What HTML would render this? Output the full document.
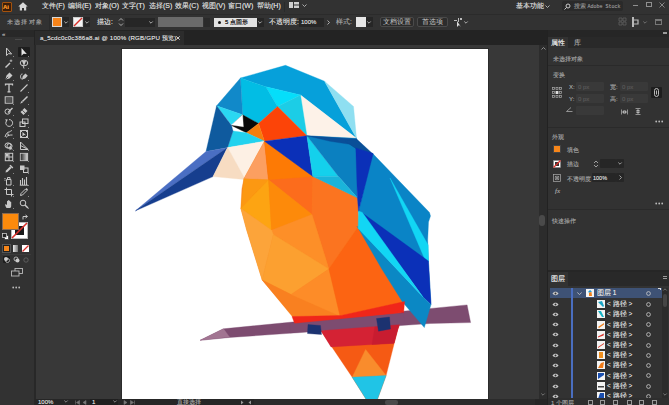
<!DOCTYPE html>
<html><head><meta charset="utf-8">
<style>
*{box-sizing:border-box;margin:0;padding:0}
html,body{width:669px;height:405px;overflow:hidden;background:#323232;font-family:"Liberation Sans",sans-serif;color:#c8c8c8}
.a{position:absolute}
.t{position:absolute;font-size:7px;line-height:8px;white-space:nowrap;color:#cfcfcf;text-shadow:0 0 0.5px currentColor}
.d{color:#9a9a9a}
.box{position:absolute;background:#262626}
.btn{position:absolute;border:1px solid #4a4a4a;border-radius:2px;background:#2c2c2c;font-size:7px;line-height:8px;color:#c8c8c8;text-align:center;white-space:nowrap}
svg.i{position:absolute;overflow:visible}
</style></head><body>
<!-- ===== menu bar ===== -->
<div class="a" style="left:0;top:0;width:669px;height:14px;background:#323232"></div>
<div class="a" style="left:2px;top:2px;width:10px;height:10px;background:#3b1e08;border:1px solid #a4520e;border-radius:1px"></div>
<div class="t" style="left:3px;top:3px;font-size:6px;line-height:8px;color:#f08a24;font-weight:bold">Ai</div>
<svg class="i" style="left:18px;top:2px" width="10" height="9" viewBox="0 0 10 9"><path d="M5 0.3L0.3 4.6H1.8V8.6H4V6H6V8.6H8.2V4.6H9.7Z" fill="#d8d8d8"/></svg>
<div class="t" style="left:42px;top:2px">文件(F)</div>
<div class="t" style="left:68px;top:2px">编辑(E)</div>
<div class="t" style="left:95px;top:2px">对象(O)</div>
<div class="t" style="left:122px;top:2px">文字(T)</div>
<div class="t" style="left:149px;top:2px">选择(S)</div>
<div class="t" style="left:175px;top:2px">效果(C)</div>
<div class="t" style="left:202px;top:2px">视图(V)</div>
<div class="t" style="left:228px;top:2px">窗口(W)</div>
<div class="t" style="left:257px;top:2px">帮助(H)</div>
<div class="a" style="left:284px;top:2px;width:1px;height:10px;background:#2a2a2a"></div>
<svg class="i" style="left:289px;top:2px" width="10" height="6" viewBox="0 0 10 6"><rect x="0" y="0" width="4" height="6" fill="#d0d0d0"/><rect x="5" y="0" width="5" height="2.5" fill="#d0d0d0"/><rect x="5" y="3.5" width="5" height="2.5" fill="#d0d0d0"/></svg>
<svg class="i" style="left:302px;top:4px" width="5" height="3" viewBox="0 0 5 3"><path d="M0.5 0.5L2.5 2.5L4.5 0.5" stroke="#bbb" fill="none" stroke-width="0.9"/></svg>
<div class="t" style="left:516px;top:2px">基本功能</div>
<svg class="i" style="left:545px;top:5px" width="5" height="3" viewBox="0 0 5 3"><path d="M0.5 0.5L2.5 2.5L4.5 0.5" stroke="#bbb" fill="none" stroke-width="0.9"/></svg>
<div class="a" style="left:562px;top:1px;width:61px;height:10px;background:#2a2a2a;border-radius:2px"></div>
<svg class="i" style="left:564px;top:3px" width="7" height="7" viewBox="0 0 7 7"><circle cx="4" cy="3" r="2" stroke="#ccc" fill="none" stroke-width="1"/><path d="M2.6 4.4L0.5 6.5" stroke="#ccc" stroke-width="1"/></svg>
<div class="t d" style="left:574px;top:2px;font-size:5.5px;color:#8a8a8a">搜索 <span style="font-family:'Liberation Mono',monospace;font-size:5px">Adobe Stock</span></div>
<div class="a" style="left:633px;top:5px;width:5px;height:1px;background:#8f8f8f"></div>
<div class="a" style="left:646px;top:2px;width:6px;height:5px;border:1px solid #8f8f8f"></div>
<svg class="i" style="left:659px;top:2px" width="6" height="6" viewBox="0 0 6 6"><path d="M0.5 0.5L5.5 5.5M5.5 0.5L0.5 5.5" stroke="#8f8f8f" stroke-width="0.9"/></svg>

<!-- ===== control bar ===== -->
<div class="a" style="left:0;top:14px;width:669px;height:1px;background:#2b2b2b"></div>
<div class="a" style="left:0;top:15px;width:669px;height:15px;background:#323232"></div>
<div class="t d" style="left:7px;top:18px;font-size:6px;letter-spacing:1.2px">未选择对象</div>
<div class="a" style="left:49px;top:15px;width:1px;height:15px;background:#2b2b2b"></div>
<div class="a" style="left:52px;top:17px;width:10px;height:10px;background:#f7841a;border:1px solid #d8d8d8"></div>
<div class="box" style="left:63px;top:17px;width:6px;height:10px"></div>
<svg class="i" style="left:64px;top:21px" width="4" height="3" viewBox="0 0 4 3"><path d="M0.3 0.5L2 2.2L3.7 0.5" stroke="#bbb" fill="none" stroke-width="0.9"/></svg>
<div class="a" style="left:73px;top:17px;width:10px;height:10px;background:#f4f4f4;border:1px solid #ccc"></div>
<svg class="i" style="left:73px;top:17px" width="10" height="10" viewBox="0 0 10 10"><path d="M1 9L9 1" stroke="#d9302a" stroke-width="1.4"/></svg>
<div class="box" style="left:84px;top:17px;width:6px;height:10px"></div>
<svg class="i" style="left:85px;top:21px" width="4" height="3" viewBox="0 0 4 3"><path d="M0.3 0.5L2 2.2L3.7 0.5" stroke="#bbb" fill="none" stroke-width="0.9"/></svg>
<div class="t" style="left:97px;top:18px;font-size:6.5px">描边:</div>
<svg class="i" style="left:118px;top:17px" width="6" height="10" viewBox="0 0 6 10"><path d="M1 3.5L3 1.5L5 3.5M1 6.5L3 8.5L5 6.5" stroke="#bbb" fill="none" stroke-width="0.9"/></svg>
<div class="box" style="left:125px;top:18px;width:22px;height:9px"></div>
<div class="box" style="left:147px;top:18px;width:8px;height:9px"></div>
<svg class="i" style="left:149px;top:21px" width="4" height="3" viewBox="0 0 4 3"><path d="M0.3 0.5L2 2.2L3.7 0.5" stroke="#bbb" fill="none" stroke-width="0.9"/></svg>
<div class="a" style="left:158px;top:17px;width:45px;height:10px;background:#6a6a6a"></div>
<div class="box" style="left:204px;top:18px;width:6px;height:9px;background:#2a2a2a"></div>
<div class="a" style="left:214px;top:18px;width:43px;height:9px;background:#e2e2e2"></div>
<div class="a" style="left:218px;top:21px;width:3px;height:3px;background:#111;border-radius:50%"></div>
<div class="t" style="left:225px;top:18px;font-size:6px;color:#222">5 点圆形</div>
<div class="box" style="left:257px;top:18px;width:7px;height:9px"></div>
<svg class="i" style="left:258px;top:21px" width="4" height="3" viewBox="0 0 4 3"><path d="M0.3 0.5L2 2.2L3.7 0.5" stroke="#bbb" fill="none" stroke-width="0.9"/></svg>
<div class="t" style="left:269px;top:18px;font-size:6.5px">不透明度:</div>
<div class="box" style="left:299px;top:18px;width:25px;height:9px"></div>
<div class="t" style="left:301px;top:18px;font-size:6px">100%</div>
<svg class="i" style="left:327px;top:20px" width="3" height="5" viewBox="0 0 3 5"><path d="M0.5 0.5L2.5 2.5L0.5 4.5" stroke="#bbb" fill="none" stroke-width="0.9"/></svg>
<div class="t d" style="left:336px;top:18px;font-size:6.5px">样式:</div>
<div class="a" style="left:356px;top:17px;width:10px;height:10px;background:#e6e6e6"></div>
<div class="box" style="left:366px;top:17px;width:7px;height:10px"></div>
<svg class="i" style="left:367px;top:21px" width="4" height="3" viewBox="0 0 4 3"><path d="M0.3 0.5L2 2.2L3.7 0.5" stroke="#bbb" fill="none" stroke-width="0.9"/></svg>
<div class="btn" style="left:380px;top:17px;width:34px;height:10px">文档设置</div>
<div class="btn" style="left:417px;top:17px;width:31px;height:10px">首选项</div>
<svg class="i" style="left:454px;top:18px" width="9" height="9" viewBox="0 0 9 9"><rect x="0" y="2" width="3" height="1" fill="#bbb"/><rect x="4" y="0" width="1" height="4" fill="#bbb"/><rect x="6" y="0" width="2" height="2" fill="#bbb"/><path d="M3 3L3 9L5 7L7 9Z" fill="#ddd"/></svg>
<svg class="i" style="left:464px;top:21px" width="4" height="3" viewBox="0 0 4 3"><path d="M0.3 0.5L2 2.2L3.7 0.5" stroke="#bbb" fill="none" stroke-width="0.9"/></svg>
<svg class="i" style="left:619px;top:18px" width="7" height="7" viewBox="0 0 7 7"><path d="M0 0H3V3H0ZM4 0H7V3H4ZM0 4H3V7H0ZM4 4H7V7H4Z" fill="none" stroke="#666" stroke-width="0.7"/></svg>
<svg class="i" style="left:632px;top:17px" width="8" height="10" viewBox="0 0 8 10"><rect x="0" y="0" width="2" height="10" fill="#b8b8b8"/><path d="M2 3H6V7H2" stroke="#b8b8b8" fill="none" stroke-width="1.2"/></svg>
<svg class="i" style="left:643px;top:21px" width="4" height="3" viewBox="0 0 4 3"><path d="M0.3 0.5L2 2.2L3.7 0.5" stroke="#777" fill="none" stroke-width="0.9"/></svg>
<div class="a" style="left:655px;top:19px;width:7px;height:6px;border:1px solid #777;border-top-width:2px"></div>

<!-- ===== tab bar ===== -->
<div class="a" style="left:0;top:30px;width:669px;height:15px;background:#232323"></div>
<div class="a" style="left:35px;top:31px;width:149px;height:14px;background:#2c2c2c"></div>
<div class="t" style="left:40px;top:34px;font-size:6.2px;letter-spacing:0.16px">a_5cdc0c0c386a8.ai @ 100% (RGB/GPU 预览)</div>
<svg class="i" style="left:176px;top:36px" width="4" height="4" viewBox="0 0 4 4"><path d="M0.3 0.3L3.7 3.7M3.7 0.3L0.3 3.7" stroke="#ddd" stroke-width="0.9"/></svg>

<!-- ===== tools panel ===== -->
<div class="a" style="left:0;top:30px;width:34px;height:375px;background:#323232"></div>
<div class="a" style="left:0;top:30px;width:34px;height:7px;background:#282828"></div>
<div class="t" style="left:2px;top:30px;font-size:6px;color:#aaa">«</div>
<div class="a" style="left:15px;top:39px;width:7px;height:1px;background:#4a4a4a"></div>

<svg width="0" height="0" class="a"><defs><linearGradient id="gr"><stop offset="0" stop-color="#222"/><stop offset="1" stop-color="#ddd"/></linearGradient></defs></svg>
<div class="a" style="left:18px;top:47px;width:12px;height:10px;background:#1d1d1d;border-radius:1px"></div>
<svg class="i" style="left:4px;top:46.5px" width="10" height="10" viewBox="0 0 10 10"><path d="M2.5 1L2.5 8.5L4.6 6.6L7.6 7Z" stroke="#c9c9c9" fill="none" stroke-width="1" stroke-linejoin="round"/></svg>
<div class="a" style="left:13px;top:55.5px;width:1px;height:1px;background:#888"></div>
<svg class="i" style="left:18.5px;top:46.5px" width="10" height="10" viewBox="0 0 10 10"><path d="M2.5 1L2.5 8.8L4.6 6.7L7.8 7.1Z" fill="#e6e6e6"/></svg>
<div class="a" style="left:27.5px;top:55.5px;width:1px;height:1px;background:#888"></div>
<svg class="i" style="left:4px;top:58.5px" width="10" height="10" viewBox="0 0 10 10"><path d="M1.5 8.5L6 4" stroke="#c9c9c9" stroke-width="1.4"/><path d="M7 0.5V3M5.7 1.8H8.3" stroke="#c9c9c9" stroke-width="0.8"/></svg>
<div class="a" style="left:13px;top:67.5px;width:1px;height:1px;background:#888"></div>
<svg class="i" style="left:18.5px;top:58.5px" width="10" height="10" viewBox="0 0 10 10"><ellipse cx="5" cy="4" rx="3.8" ry="2.8" stroke="#c9c9c9" fill="none" stroke-width="1"/><path d="M4 6.5L5 9.5" stroke="#c9c9c9" fill="none" stroke-width="1"/><path d="M3 2L5 7L7 2Z" fill="#c9c9c9"/></svg>
<div class="a" style="left:27.5px;top:67.5px;width:1px;height:1px;background:#888"></div>
<svg class="i" style="left:4px;top:70.5px" width="10" height="10" viewBox="0 0 10 10"><path d="M1.5 8.5L2.5 4.5L5.5 1.5L8.5 4.5L5.5 7.5Z" fill="#c9c9c9"/><path d="M1.5 8.5L4.2 5.8" stroke="#303030" stroke-width="0.8"/></svg>
<div class="a" style="left:13px;top:79.5px;width:1px;height:1px;background:#888"></div>
<svg class="i" style="left:18.5px;top:70.5px" width="10" height="10" viewBox="0 0 10 10"><path d="M3 8.5L3.8 5L6.5 2.5L8.8 4.8L6.2 7.6Z" fill="#c9c9c9"/><path d="M3.5 3C1 3 1 7 3 8.5" stroke="#c9c9c9" fill="none" stroke-width="1"/></svg>
<div class="a" style="left:27.5px;top:79.5px;width:1px;height:1px;background:#888"></div>
<svg class="i" style="left:4px;top:82.5px" width="10" height="10" viewBox="0 0 10 10"><path d="M1.5 2.5V1.2H8.5V2.5M5 1.2V8.8M3.5 8.8H6.5" stroke="#c9c9c9" fill="none" stroke-width="1.3"/></svg>
<svg class="i" style="left:18.5px;top:82.5px" width="10" height="10" viewBox="0 0 10 10"><path d="M1.5 8.5L8.5 1.5" stroke="#c9c9c9" stroke-width="1.1"/></svg>
<div class="a" style="left:27.5px;top:91.5px;width:1px;height:1px;background:#888"></div>
<svg class="i" style="left:4px;top:94.5px" width="10" height="10" viewBox="0 0 10 10"><rect x="1.2" y="1.8" width="7.6" height="6.4" stroke="#c9c9c9" fill="none" stroke-width="1" stroke-width="1.1"/><rect x="2.2" y="2.8" width="5.6" height="4.4" fill="#555"/></svg>
<div class="a" style="left:13px;top:103.5px;width:1px;height:1px;background:#888"></div>
<svg class="i" style="left:18.5px;top:94.5px" width="10" height="10" viewBox="0 0 10 10"><path d="M1.2 8.8L2.5 6L4 7.3Z" fill="#c9c9c9"/><path d="M3.4 6.5L8.5 1.5" stroke="#c9c9c9" stroke-width="1.5"/></svg>
<div class="a" style="left:27.5px;top:103.5px;width:1px;height:1px;background:#888"></div>
<svg class="i" style="left:4px;top:106px" width="10" height="10" viewBox="0 0 10 10"><circle cx="3.6" cy="5.6" r="2.6" stroke="#c9c9c9" fill="none" stroke-width="1" stroke-width="1.1"/><path d="M4 6.5L8.5 2" stroke="#c9c9c9" stroke-width="1.4"/></svg>
<div class="a" style="left:13px;top:115px;width:1px;height:1px;background:#888"></div>
<svg class="i" style="left:18.5px;top:106px" width="10" height="10" viewBox="0 0 10 10"><path d="M1.5 6L5.5 2L8.5 5L4.5 9Z" fill="#c9c9c9"/><path d="M3.3 4.2L6.5 7.4" stroke="#303030" stroke-width="0.8"/></svg>
<div class="a" style="left:27.5px;top:115px;width:1px;height:1px;background:#888"></div>
<svg class="i" style="left:4px;top:117.7px" width="10" height="10" viewBox="0 0 10 10"><path d="M2.8 2.6A3.4 3.4 0 1 0 5 1.6" stroke="#c9c9c9" fill="none" stroke-width="1" stroke-width="1.1"/><path d="M1.2 1.2L3.8 1.4L2.4 3.8Z" fill="#c9c9c9"/></svg>
<div class="a" style="left:13px;top:126.7px;width:1px;height:1px;background:#888"></div>
<svg class="i" style="left:18.5px;top:117.7px" width="10" height="10" viewBox="0 0 10 10"><rect x="3.5" y="1" width="5.5" height="4.5" stroke="#c9c9c9" fill="none" stroke-width="1"/><rect x="1" y="4" width="5" height="4.5" stroke="#c9c9c9" fill="none" stroke-width="1"/></svg>
<div class="a" style="left:27.5px;top:126.7px;width:1px;height:1px;background:#888"></div>
<svg class="i" style="left:4px;top:129px" width="10" height="10" viewBox="0 0 10 10"><path d="M1 8C2 5 3 3 5 3C6 3 7 1.5 8 1.5M2 8.5C4 6 6 6 8.5 6" stroke="#c9c9c9" fill="none" stroke-width="1" stroke-width="1.2"/><path d="M3 4L5 5L4 7Z" fill="#c9c9c9"/></svg>
<div class="a" style="left:13px;top:138px;width:1px;height:1px;background:#888"></div>
<svg class="i" style="left:18.5px;top:129px" width="10" height="10" viewBox="0 0 10 10"><rect x="1.5" y="1.5" width="7" height="7" stroke="#c9c9c9" fill="none" stroke-width="1"/><path d="M1 1H3V3H1ZM7 1H9V3H7ZM1 7H3V9H1ZM7 7H9V9H7Z" fill="#c9c9c9"/><path d="M3.5 3L3.5 7.5L5 6L7 6.2Z" fill="#c9c9c9"/></svg>
<div class="a" style="left:27.5px;top:138px;width:1px;height:1px;background:#888"></div>
<svg class="i" style="left:4px;top:140.5px" width="10" height="10" viewBox="0 0 10 10"><ellipse cx="4" cy="4.5" rx="3" ry="2.6" stroke="#c9c9c9" fill="none" stroke-width="1"/><ellipse cx="5.5" cy="5" rx="2.6" ry="2.4" stroke="#c9c9c9" fill="none" stroke-width="1"/><path d="M5.5 5L5.5 9.5L7 8.2L9 8.5Z" fill="#c9c9c9"/></svg>
<div class="a" style="left:13px;top:149.5px;width:1px;height:1px;background:#888"></div>
<svg class="i" style="left:18.5px;top:140.5px" width="10" height="10" viewBox="0 0 10 10"><path d="M1.5 1V8.5H9M1.5 4.5L9 8.5M1.5 1L9 8.5" stroke="#c9c9c9" fill="none" stroke-width="1"/></svg>
<div class="a" style="left:27.5px;top:149.5px;width:1px;height:1px;background:#888"></div>
<svg class="i" style="left:4px;top:152.3px" width="10" height="10" viewBox="0 0 10 10"><rect x="1.3" y="1.3" width="7.4" height="7.4" stroke="#c9c9c9" fill="none" stroke-width="1"/><path d="M1.3 5H8.7M5 1.3V8.7" stroke="#c9c9c9" fill="none" stroke-width="1"/><path d="M2 2H4.5V4.5H2Z" fill="#c9c9c9"/></svg>
<div class="a" style="left:13px;top:161.3px;width:1px;height:1px;background:#888"></div>
<svg class="i" style="left:18.5px;top:152.3px" width="10" height="10" viewBox="0 0 10 10"><rect x="1.3" y="1.3" width="7.4" height="7.4" fill="url(#gr)" stroke="#c9c9c9" stroke-width="0.8"/></svg>
<div class="a" style="left:27.5px;top:161.3px;width:1px;height:1px;background:#888"></div>
<svg class="i" style="left:4px;top:164.2px" width="10" height="10" viewBox="0 0 10 10"><path d="M1.5 8.5L2 6.5L6 2.5L7.5 4L3.5 8Z" fill="#c9c9c9"/><path d="M6 1.2L8.8 4" stroke="#c9c9c9" stroke-width="1.5"/></svg>
<div class="a" style="left:13px;top:173.2px;width:1px;height:1px;background:#888"></div>
<svg class="i" style="left:18.5px;top:164.2px" width="10" height="10" viewBox="0 0 10 10"><rect x="1" y="1.5" width="4.5" height="4.5" fill="#c9c9c9"/><rect x="4.5" y="4" width="4.5" height="4.5" stroke="#c9c9c9" fill="none" stroke-width="1"/></svg>
<div class="a" style="left:27.5px;top:173.2px;width:1px;height:1px;background:#888"></div>
<svg class="i" style="left:4px;top:176px" width="10" height="10" viewBox="0 0 10 10"><path d="M2.5 3.5H7V9H2.5Z" stroke="#c9c9c9" fill="none" stroke-width="1"/><path d="M3.5 3.5V1.5H6V3.5" stroke="#c9c9c9" fill="none" stroke-width="1"/><path d="M0.5 2.5H1.5M0.5 4.2H1.5" stroke="#c9c9c9" fill="none" stroke-width="1"/></svg>
<div class="a" style="left:13px;top:185px;width:1px;height:1px;background:#888"></div>
<svg class="i" style="left:18.5px;top:176px" width="10" height="10" viewBox="0 0 10 10"><path d="M1.5 9V4M3.5 9V2M5.5 9V3.5M7.5 9V1" stroke="#c9c9c9" stroke-width="1.1"/><path d="M0.8 9.2H9" stroke="#c9c9c9" fill="none" stroke-width="1"/></svg>
<div class="a" style="left:27.5px;top:185px;width:1px;height:1px;background:#888"></div>
<svg class="i" style="left:4px;top:187px" width="10" height="10" viewBox="0 0 10 10"><path d="M2.5 0.5V7.5H9.5M0.5 2.5H7.5V9.5" stroke="#c9c9c9" fill="none" stroke-width="1" stroke-width="1.1"/></svg>
<div class="a" style="left:13px;top:196px;width:1px;height:1px;background:#888"></div>
<svg class="i" style="left:18.5px;top:187px" width="10" height="10" viewBox="0 0 10 10"><path d="M1.5 8.5L2 6.5L6.5 2L8 3.5L3.5 8Z" stroke="#c9c9c9" fill="none" stroke-width="1"/><path d="M6.5 2L7.5 1L9 2.5L8 3.5" fill="#c9c9c9"/></svg>
<div class="a" style="left:27.5px;top:196px;width:1px;height:1px;background:#888"></div>
<svg class="i" style="left:4px;top:199px" width="10" height="10" viewBox="0 0 10 10"><path d="M2.5 9C1 7 1 5.5 1.5 5L3 6V2.2C3 1.5 4 1.5 4 2.2V4.5V1.5C4 0.8 5 0.8 5 1.5V4.5V2C5 1.3 6 1.3 6 2V5V3C6 2.3 7.2 2.3 7.2 3V7C7.2 8 6.5 9 6 9Z" fill="#c9c9c9"/></svg>
<div class="a" style="left:13px;top:208px;width:1px;height:1px;background:#888"></div>
<svg class="i" style="left:18.5px;top:199px" width="10" height="10" viewBox="0 0 10 10"><circle cx="4" cy="4" r="2.8" stroke="#c9c9c9" fill="none" stroke-width="1" stroke-width="1.1"/><path d="M6 6L9 9" stroke="#c9c9c9" stroke-width="1.5"/></svg>
<div class="a" style="left:27.5px;top:208px;width:1px;height:1px;background:#888"></div>
<div class="a" style="left:11px;top:222px;width:17px;height:17px;background:#fff;border:1px solid #bbb"></div>
<div class="a" style="left:15px;top:226px;width:9px;height:9px;background:#1a1a1a"></div>
<svg class="i" style="left:11px;top:222px" width="17" height="17" viewBox="0 0 17 17"><path d="M1 16L16 1" stroke="#d9302a" stroke-width="1.6"/></svg>
<div class="a" style="left:2px;top:213px;width:17px;height:17px;background:#fc8a0c;border:1px solid #8a6a50"></div>
<svg class="i" style="left:22px;top:214px" width="7" height="6" viewBox="0 0 7 6"><path d="M1 5.5V2.5H5M3.5 1L5.5 2.5L3.5 4" stroke="#c9c9c9" fill="none" stroke-width="1"/></svg>
<svg class="i" style="left:2px;top:233px" width="7" height="7" viewBox="0 0 7 7"><rect x="2.5" y="2.5" width="4" height="4" fill="#fff" stroke="#222" stroke-width="0.6"/><rect x="0.5" y="0.5" width="4" height="4" fill="#222" stroke="#c9c9c9" stroke-width="0.8"/></svg>
<div class="a" style="left:3px;top:245px;width:7px;height:7px;background:#f7861a;border:1px solid #222;box-shadow:0 0 0 1px #555"></div>
<div class="a" style="left:13px;top:245px;width:5px;height:7px;background:linear-gradient(90deg,#eee,#777)"></div>
<svg class="i" style="left:22px;top:245px" width="7" height="7" viewBox="0 0 7 7"><rect x="0" y="0" width="7" height="7" fill="#fff"/><path d="M0.5 6.5L6.5 0.5" stroke="#d9302a" stroke-width="1.2"/></svg>
<div class="a" style="left:2px;top:254px;width:29px;height:1px;background:#3c3c3c"></div>
<div class="a" style="left:3px;top:256px;width:7px;height:7px;background:#1c1c1c;border-radius:1px"></div>
<svg class="i" style="left:3px;top:256px" width="7" height="7" viewBox="0 0 7 7"><circle cx="3" cy="3" r="2" fill="#ccc"/><circle cx="4.5" cy="4.5" r="2" fill="none" stroke="#ccc" stroke-width="0.8"/></svg>
<svg class="i" style="left:13px;top:256px" width="7" height="7" viewBox="0 0 7 7"><circle cx="3" cy="3" r="2" fill="none" stroke="#ccc" stroke-width="0.8"/><circle cx="4.5" cy="4.5" r="2" fill="#ccc"/></svg>
<svg class="i" style="left:23px;top:257px" width="6" height="6" viewBox="0 0 6 6"><circle cx="3" cy="3" r="2.2" fill="none" stroke="#666" stroke-width="0.8"/></svg>
<svg class="i" style="left:11px;top:268px" width="12" height="9" viewBox="0 0 12 9"><rect x="4" y="0.5" width="7.5" height="5" fill="none" stroke="#bbb" stroke-width="0.9"/><rect x="0.5" y="3" width="7.5" height="5" fill="#303030" stroke="#bbb" stroke-width="0.9"/></svg>
<svg class="i" style="left:12px;top:286px" width="9" height="3" viewBox="0 0 9 3"><circle cx="1.2" cy="1.5" r="0.9" fill="#bbb"/><circle cx="4.2" cy="1.5" r="0.9" fill="#bbb"/><circle cx="7.2" cy="1.5" r="0.9" fill="#bbb"/></svg>

<!-- ===== canvas ===== -->
<div class="a" style="left:35px;top:45px;width:504px;height:354px;background:#383838"></div>
<div class="a" style="left:539px;top:45px;width:8px;height:354px;background:#2c2c2c"></div>
<svg class="i" style="left:541px;top:47px" width="5" height="3" viewBox="0 0 5 3"><path d="M0.5 2.5L2.5 0.5L4.5 2.5" stroke="#999" fill="none" stroke-width="0.9"/></svg>
<div class="a" style="left:539px;top:215px;width:6px;height:11px;background:#4a4a4a;border-radius:3px"></div>
<div class="a" style="left:121px;top:48px;width:368px;height:351px;background:#2b2b2b"></div>
<div class="a" style="left:122px;top:49px;width:366px;height:350px;background:#fff"></div>
<svg class="a" style="left:0;top:0" width="669" height="405" viewBox="0 0 669 405" stroke-width="0.35" stroke-linejoin="round"><polygon fill="#06a0da" stroke="#06a0da" points="240.5,78 285.5,65.3 324.5,81.2 356.5,138.3 300.5,95 265.8,86.8"/><polygon fill="#8fdff1" stroke="#8fdff1" points="324.5,81.2 353.5,106.5 356.5,138.3"/><polygon fill="#fdf2e8" stroke="#fdf2e8" points="300.5,95 356.5,138.3 306.9,135.8"/><polygon fill="#05defa" stroke="#05defa" points="265.8,86.8 300.5,95 277.5,106.5"/><polygon fill="#1ccde6" stroke="#1ccde6" points="277.5,106.5 300.5,95 306.9,135.8"/><polygon fill="#02bde4" stroke="#02bde4" points="240.5,78 265.8,86.8 277.5,106.5 258.5,123.5 242.6,114.8"/><polygon fill="#1189c9" stroke="#1189c9" points="240.5,78 242.6,114.8 216.6,105.8"/><polygon fill="#2ad8f2" stroke="#2ad8f2" points="216.6,105.8 242.6,114.8 231.5,125"/><polygon fill="#0a0a0a" stroke="#0a0a0a" points="242.6,114.8 258.5,123.5 246.4,132.8 231.5,125.5"/><polygon fill="#ffffff" stroke="#ffffff" points="242.6,114.8 231.5,125 243.4,126.7"/><polygon fill="#fc4408" stroke="#fc4408" points="277.5,106.5 306.9,135.8 264.5,141.2 258.5,123.5"/><polygon fill="#f67d0c" stroke="#f67d0c" points="258.5,123.5 246.4,132.8 264.5,141.2"/><polygon fill="#22d2ee" stroke="#22d2ee" points="233,131 246.4,132.8 264.5,141.2 227.6,147.6"/><polygon fill="#0f5a9e" stroke="#0f5a9e" points="216.6,105.8 231.5,125.5 233,131 227.6,147.6 206,151.5"/><polygon fill="#4a6ec3" stroke="#4a6ec3" points="135.5,210.8 206,151.5 227.2,147.8"/><polygon fill="#163e8e" stroke="#163e8e" points="135.5,210.8 227.2,147.8 213,176.6"/><polygon fill="#fdf0e4" stroke="#fdf0e4" points="227.6,147.6 264.5,141.2 244.7,178.5"/><polygon fill="#f7dcc2" stroke="#f7dcc2" points="227.6,147.6 244.7,178.5 243.9,179.5 213,176.6"/><polygon fill="#7d4c70" stroke="#7d4c70" points="200.1,340.3 223.5,328.8 467.1,304.9 470.6,322.6 430,323.5 229.5,337.5"/><polygon fill="#a27592" stroke="#a27592" points="200.1,340.3 223.5,328.8 229.5,337"/><polygon fill="#f98420" stroke="#f98420" points="264.5,141.2 312.8,176.4 357.4,197.8 358.9,226 392.2,285 403.7,297.8 404.6,302 341.1,315.8 292.5,316.8 262.2,280 246.7,230 240.9,208.5 241.9,188.7 243.9,178.8"/><polygon fill="#fc9f60" stroke="#fc9f60" points="264.5,141.2 268.5,179.8 243.9,178.8"/><polygon fill="#fc6c1c" stroke="#fc6c1c" points="264.5,141.2 312.8,176.4 312,214.4 268.5,179.8"/><polygon fill="#fd7a05" stroke="#fd7a05" points="264.5,141.2 312.8,176.4 268.5,179.8"/><polygon fill="#fc9812" stroke="#fc9812" points="243.9,178.8 268.5,179.8 240.9,208.5"/><polygon fill="#fda412" stroke="#fda412" points="268.5,179.8 240.9,208.5 271.5,230.2"/><polygon fill="#fd8a0a" stroke="#fd8a0a" points="268.5,179.8 312,214.4 271.5,230.2"/><polygon fill="#fb7420" stroke="#fb7420" points="312.8,176.4 357.4,197.8 358.9,226 328.9,268.9 312,214.4"/><polygon fill="#fd8f28" stroke="#fd8f28" points="271.5,230.2 312,214.4 328.9,268.9 273.3,234.4"/><polygon fill="#fca43a" stroke="#fca43a" points="240.9,208.5 271.5,230.2 273.3,234.4 262.2,280 246.7,230"/><polygon fill="#fca030" stroke="#fca030" points="273.3,234.4 328.9,268.9 291.1,294.4 262.2,280"/><polygon fill="#f98020" stroke="#f98020" points="262.2,280 291.1,294.4 340,316 293.3,316.7"/><polygon fill="#fd8c28" stroke="#fd8c28" points="291.1,294.4 328.9,268.9 340,316"/><polygon fill="#fc6412" stroke="#fc6412" points="328.9,268.9 358.9,226 392.2,285 403.7,297.8 404.6,302 341.1,315.8 340,316"/><polygon fill="#0b30b8" stroke="#0b30b8" points="264.5,141.2 306.9,135.8 312.8,176.4"/><polygon fill="#14d0ec" stroke="#14d0ec" points="306.9,135.8 312.8,176.4 338.5,176.4"/><polygon fill="#0b80c0" stroke="#0b80c0" points="306.9,135.8 356.5,138.3 357.3,149.8 357.4,197.8 338.5,176.4"/><polygon fill="#0a4f98" stroke="#0a4f98" points="306.9,135.8 356.7,139 356.5,148.7 349.8,144.3 330,141.3"/><polygon fill="#1ab4da" stroke="#1ab4da" points="312.8,176.4 338.5,176.4 357.4,197.8"/><polygon fill="#0a4f98" stroke="#0a4f98" points="345,141 356.7,139 373.5,154.6 356.2,148.7"/><polygon fill="#0a84c6" stroke="#0a84c6" points="372,152.8 429.5,212.5 430.5,216 428.5,222 427.7,240 428.5,262 431,304.5 362.4,217.6 358.5,211.6"/><polygon fill="#0b30b8" stroke="#0b30b8" points="355.8,148 373.2,153.6 358.5,211.6 357.4,197.8"/><polygon fill="#12d6f4" stroke="#12d6f4" points="390,178 428.2,245 428.4,262 426,262"/><polygon fill="#0b30b8" stroke="#0b30b8" points="362.4,213 428.4,261 431,304.5 423,297"/><polygon fill="#0b88c4" stroke="#0b88c4" points="357.6,227.2 423,297 431,304.5 424.3,327.6 402.5,302 381.5,268.6 357,226"/><polygon fill="#12d6f4" stroke="#12d6f4" points="358.5,211 362.4,212.4 423,297 358.2,228.5"/><polygon fill="#f0261a" stroke="#f0261a" points="292,316.5 341.1,315.5 404.6,301.5 403.6,313 295,324.5"/><polygon fill="#f55a14" stroke="#f55a14" points="321.1,330.9 403.6,312 397.7,329.6 386.1,375.6 373.3,410.6 352.2,377.2"/><polygon fill="#d42234" stroke="#d42234" points="321.1,330.9 403.6,312 397.7,329.6 394,343.2 331,346.9"/><polygon fill="#c81c30" stroke="#c81c30" points="375,326 403.6,312 397.7,329.6 394,343.2 372,344.5"/><polygon fill="#f98c2c" stroke="#f98c2c" points="365.6,349.4 352.2,377.2 386.1,375.6"/><polygon fill="#20c4e6" stroke="#20c4e6" points="352.2,377.2 386.1,375.6 373.3,410.6"/><polygon fill="#7d4c70" stroke="#7d4c70" points="290,324 403.6,313 404.5,324 290,332.8"/><polygon fill="#1c3270" stroke="#1c3270" points="308,324.5 320.5,325.5 321.5,334.5 307.5,333.5"/><polygon fill="#1c3270" stroke="#1c3270" points="376.5,318.5 389.5,317 390.5,329 378.5,331.2"/></svg>
<div class="a" style="left:34px;top:45px;width:2px;height:360px;background:#282828"></div>
<!-- status bar -->
<div class="a" style="left:35px;top:399px;width:512px;height:6px;background:#262626"></div>
<div class="t" style="left:38px;top:399px;font-size:6px;line-height:7px">100%</div>
<svg class="i" style="left:64px;top:400px" width="4" height="3" viewBox="0 0 4 3"><path d="M0.3 0.5L2 2.2L3.7 0.5" stroke="#999" fill="none" stroke-width="0.8"/></svg>
<svg class="i" style="left:75px;top:400px" width="12" height="5" viewBox="0 0 12 5"><path d="M0.5 0.5V4.5M4.5 0.5L1.5 2.5L4.5 4.5ZM11 0.5L8 2.5L11 4.5Z" fill="#777" stroke="#777" stroke-width="0.6"/></svg>
<div class="t" style="left:91px;top:399px;font-size:6px;line-height:7px">1</div>
<div class="a" style="left:90px;top:399px;width:28px;height:6px;background:#1f1f1f"></div>
<div class="t" style="left:92px;top:399px;font-size:6px;line-height:7px">1</div>
<svg class="i" style="left:113px;top:400px" width="4" height="3" viewBox="0 0 4 3"><path d="M0.3 0.5L2 2.2L3.7 0.5" stroke="#999" fill="none" stroke-width="0.8"/></svg>
<svg class="i" style="left:123px;top:400px" width="12" height="5" viewBox="0 0 12 5"><path d="M1 0.5L4 2.5L1 4.5ZM7.5 0.5L10.5 2.5L7.5 4.5ZM11.5 0.5V4.5" fill="#777" stroke="#777" stroke-width="0.6"/></svg>
<div class="t d" style="left:177px;top:399px;font-size:6px;line-height:7px">直接选择</div>
<svg class="i" style="left:240px;top:400px" width="12" height="5" viewBox="0 0 12 5"><path d="M1 0.5L3.5 2.5L1 4.5ZM11 0.5L8.5 2.5L11 4.5Z" fill="#999"/></svg>
<div class="a" style="left:254px;top:399px;width:281px;height:6px;background:#2b2b2b"></div>
<div class="a" style="left:385px;top:400px;width:13px;height:5px;background:#4a4a4a;border-radius:2px"></div>

<!-- ===== right panel ===== -->
<div class="a" style="left:547px;top:30px;width:122px;height:375px;background:#323232"></div>
<div class="a" style="left:547px;top:30px;width:1px;height:375px;background:#222"></div>
<div class="a" style="left:548px;top:30px;width:121px;height:7px;background:#262626"></div>
<div class="a" style="left:663px;top:32px;width:4px;height:2px;border-top:1px solid #999;border-bottom:1px solid #999"></div>
<div class="a" style="left:548px;top:37px;width:121px;height:11px;background:#292929"></div>
<div class="a" style="left:548px;top:37px;width:20px;height:11px;background:#323232"></div>
<div class="t" style="left:551px;top:39px;color:#e0e0e0">属性</div>
<div class="t d" style="left:574px;top:39px">库</div>
<div class="t d" style="left:553px;top:55px;font-size:6px">未选择对象</div>
<div class="a" style="left:548px;top:65px;width:121px;height:1px;background:#2a2a2a"></div>
<div class="t d" style="left:553px;top:71px;font-size:6px">变换</div>
<svg class="i" style="left:552px;top:87px" width="10" height="11" viewBox="0 0 10 11"><g fill="none" stroke="#aaa" stroke-width="0.7"><rect x="0.5" y="0.5" width="2" height="2"/><rect x="4" y="0.5" width="2" height="2"/><rect x="7.5" y="0.5" width="2" height="2"/><rect x="0.5" y="4.5" width="2" height="2"/><rect x="7.5" y="4.5" width="2" height="2"/><rect x="0.5" y="8.5" width="2" height="2"/><rect x="4" y="8.5" width="2" height="2"/><rect x="7.5" y="8.5" width="2" height="2"/></g><rect x="3.6" y="4" width="2.8" height="3" fill="#ddd"/></svg>
<div class="t d" style="left:569px;top:83px;font-size:6px">X:</div>
<div class="a" style="left:576px;top:82px;width:28px;height:9px;background:#393939;border-radius:1px"></div>
<div class="t" style="left:578px;top:83px;font-size:6px;color:#555">0 px</div>
<div class="t d" style="left:569px;top:95px;font-size:6px">Y:</div>
<div class="a" style="left:576px;top:94px;width:28px;height:9px;background:#393939;border-radius:1px"></div>
<div class="t" style="left:578px;top:95px;font-size:6px;color:#555">0 px</div>
<div class="t d" style="left:610px;top:83px;font-size:6px">宽:</div>
<div class="a" style="left:620px;top:82px;width:28px;height:9px;background:#393939;border-radius:1px"></div>
<div class="t" style="left:622px;top:83px;font-size:6px;color:#555">0 px</div>
<div class="t d" style="left:610px;top:95px;font-size:6px">高:</div>
<div class="a" style="left:620px;top:94px;width:28px;height:9px;background:#393939;border-radius:1px"></div>
<div class="t" style="left:622px;top:95px;font-size:6px;color:#555">0 px</div>
<div class="a" style="left:651px;top:87px;width:11px;height:11px;background:#1e1e1e;border-radius:1px"></div>
<svg class="i" style="left:654px;top:88px" width="5" height="9" viewBox="0 0 5 9"><rect x="0.5" y="0.5" width="4" height="8" rx="2" fill="none" stroke="#ccc" stroke-width="0.9"/><path d="M2.5 2.5V6.5" stroke="#ccc" stroke-width="0.9"/></svg>
<svg class="i" style="left:566px;top:107px" width="7" height="5" viewBox="0 0 7 5"><path d="M0.5 4.5H6.5M0.5 4.5L5 0.5" stroke="#aaa" fill="none" stroke-width="0.8"/></svg>
<div class="a" style="left:576px;top:106px;width:28px;height:9px;background:#393939;border-radius:1px"></div>
<svg class="i" style="left:621px;top:109px" width="7" height="6" viewBox="0 0 7 6"><path d="M0.5 0.5V5.5M6.5 0.5V5.5M1.5 3L3 1.5V4.5ZM5.5 3L4 1.5V4.5Z" stroke="#bbb" fill="#bbb" stroke-width="0.7"/></svg>
<svg class="i" style="left:635px;top:108px" width="6" height="7" viewBox="0 0 6 7"><path d="M0.5 0.5H5.5M0.5 6.5H5.5M3 1.5L1.5 3H4.5ZM3 5.5L1.5 4H4.5Z" stroke="#bbb" fill="#bbb" stroke-width="0.7"/></svg>
<svg class="i" style="left:655px;top:120px" width="9" height="3" viewBox="0 0 9 3"><circle cx="1.2" cy="1.5" r="0.9" fill="#bbb"/><circle cx="4.2" cy="1.5" r="0.9" fill="#bbb"/><circle cx="7.2" cy="1.5" r="0.9" fill="#bbb"/></svg>
<div class="a" style="left:548px;top:127px;width:121px;height:1px;background:#2a2a2a"></div>
<div class="t d" style="left:552px;top:133px;font-size:6px">外观</div>
<div class="a" style="left:553px;top:145px;width:8px;height:8px;background:#f7861a;border:1px solid #444"></div>
<div class="t d" style="left:567px;top:146px;font-size:6px">填色</div>
<svg class="i" style="left:553px;top:160px" width="8" height="8" viewBox="0 0 8 8"><rect x="0.5" y="0.5" width="7" height="7" fill="#fff" stroke="#888" stroke-width="0.6"/><rect x="2" y="2" width="4" height="4" fill="#333"/><path d="M0.5 7.5L7.5 0.5" stroke="#d9302a" stroke-width="1.2"/></svg>
<div class="t d" style="left:567px;top:160px;font-size:6px">描边</div>
<svg class="i" style="left:593px;top:160px" width="6" height="8" viewBox="0 0 6 8"><path d="M1 3L3 1L5 3M1 5L3 7L5 5" stroke="#bbb" fill="none" stroke-width="0.8"/></svg>
<div class="a" style="left:600px;top:159px;width:16px;height:9px;background:#262626;border-radius:1px"></div>
<div class="a" style="left:616px;top:159px;width:8px;height:9px;background:#262626;border-radius:1px"></div>
<svg class="i" style="left:618px;top:162px" width="4" height="3" viewBox="0 0 4 3"><path d="M0.3 0.5L2 2.2L3.7 0.5" stroke="#bbb" fill="none" stroke-width="0.8"/></svg>
<svg class="i" style="left:553px;top:174px" width="8" height="8" viewBox="0 0 8 8"><rect x="0.5" y="0.5" width="7" height="7" fill="none" stroke="#aaa" stroke-width="0.7"/><path d="M2 2L6 6M6 2L2 6" stroke="#aaa" stroke-width="0.7"/><circle cx="4" cy="4" r="1.8" fill="none" stroke="#aaa" stroke-width="0.6"/></svg>
<div class="t d" style="left:567px;top:175px;font-size:6px">不透明度</div>
<div class="a" style="left:592px;top:173px;width:24px;height:9px;background:#262626;border-radius:1px"></div>
<div class="t" style="left:593px;top:174px;font-size:5.5px">100%</div>
<div class="a" style="left:616px;top:173px;width:8px;height:9px;background:#262626;border-radius:1px"></div>
<svg class="i" style="left:619px;top:175px" width="3" height="5" viewBox="0 0 3 5"><path d="M0.5 0.5L2.5 2.5L0.5 4.5" stroke="#bbb" fill="none" stroke-width="0.8"/></svg>
<div class="t d" style="left:555px;top:187px;font-size:7px;font-style:italic;font-family:'Liberation Serif',serif">fx</div>
<svg class="i" style="left:655px;top:202px" width="9" height="3" viewBox="0 0 9 3"><circle cx="1.2" cy="1.5" r="0.9" fill="#bbb"/><circle cx="4.2" cy="1.5" r="0.9" fill="#bbb"/><circle cx="7.2" cy="1.5" r="0.9" fill="#bbb"/></svg>
<div class="a" style="left:548px;top:209px;width:121px;height:1px;background:#2a2a2a"></div>
<div class="t d" style="left:552px;top:217px;font-size:6px">快速操作</div>
<div class="a" style="left:548px;top:270px;width:121px;height:2px;background:#262626"></div>
<div class="a" style="left:548px;top:272px;width:121px;height:14px;background:#292929"></div>
<div class="a" style="left:548px;top:272px;width:20px;height:14px;background:#323232"></div>
<div class="t" style="left:551px;top:275px;color:#e0e0e0">图层</div>
<div class="a" style="left:663px;top:276px;width:4px;height:3px;border-top:1px solid #999;border-bottom:1px solid #999"></div>
<div class="a" style="left:550px;top:288px;width:112px;height:10px;background:#3e5275"></div>
<div class="a" style="left:658px;top:288px;width:3px;height:3px;background:linear-gradient(45deg,transparent 50%,#ddd 50%)"></div>
<div class="a" style="left:571px;top:288px;width:2px;height:111px;background:#4a6ec0"></div>
<div class="a" style="left:662px;top:288px;width:6px;height:110px;background:#2b2b2b"></div>
<div class="a" style="left:663px;top:294px;width:4px;height:13px;background:#454545;border-radius:2px"></div>
<svg class="i" style="left:663px;top:288px" width="4" height="3" viewBox="0 0 4 3"><path d="M0.3 2.5L2 0.8L3.7 2.5" stroke="#888" fill="none" stroke-width="0.8"/></svg>
<svg class="i" style="left:663px;top:393px" width="4" height="3" viewBox="0 0 4 3"><path d="M0.3 0.5L2 2.2L3.7 0.5" stroke="#888" fill="none" stroke-width="0.8"/></svg>
<svg class="i" style="left:541px;top:393px" width="4" height="3" viewBox="0 0 4 3"><path d="M0.3 0.5L2 2.2L3.7 0.5" stroke="#888" fill="none" stroke-width="0.8"/></svg>
<svg class="i" style="left:552px;top:290.8px" width="7" height="5" viewBox="0 0 7 5"><path d="M0.5 2.5C2 0.3 5 0.3 6.5 2.5C5 4.7 2 4.7 0.5 2.5Z" fill="#ccc"/><circle cx="3.5" cy="2.5" r="1" fill="#333"/></svg>
<svg class="i" style="left:646px;top:290.8px" width="5" height="5" viewBox="0 0 5 5"><circle cx="2.5" cy="2.5" r="1.9" fill="none" stroke="#ccc" stroke-width="0.8"/></svg>
<svg class="i" style="left:577px;top:292px" width="5" height="3" viewBox="0 0 5 3"><path d="M0.3 0.5L2.5 2.5L4.7 0.5" stroke="#ccc" fill="none" stroke-width="0.8"/></svg>
<svg class="i" style="left:586px;top:289px" width="8" height="8" viewBox="0 0 8 8"><rect width="8" height="8" fill="#f4f4f4"/><path d="M3 7L3 3.5L5.5 3L6 7Z" fill="#f0801a"/><path d="M2 3L4 1L6 2.5L3 3.5Z" fill="#1a9bd5"/></svg>
<div class="t" style="left:597px;top:289.3px;font-size:6.5px;color:#ddd">图层 1</div>
<svg class="i" style="left:552px;top:301.6px" width="7" height="5" viewBox="0 0 7 5"><path d="M0.5 2.5C2 0.3 5 0.3 6.5 2.5C5 4.7 2 4.7 0.5 2.5Z" fill="#ccc"/><circle cx="3.5" cy="2.5" r="1" fill="#333"/></svg>
<svg class="i" style="left:646px;top:301.6px" width="5" height="5" viewBox="0 0 5 5"><circle cx="2.5" cy="2.5" r="1.9" fill="none" stroke="#ccc" stroke-width="0.8"/></svg>
<svg class="i" style="left:597px;top:300.1px" width="8" height="8" viewBox="0 0 8 8"><rect width="8" height="8" fill="#f4f4f4"/><path d="M1 2L5 1L7 6L6 7Z" fill="#1aa6c8"/></svg>
<div class="t" style="left:607px;top:300.1px;font-size:6.5px">&lt; 路径 &gt;</div>
<svg class="i" style="left:552px;top:311.8px" width="7" height="5" viewBox="0 0 7 5"><path d="M0.5 2.5C2 0.3 5 0.3 6.5 2.5C5 4.7 2 4.7 0.5 2.5Z" fill="#ccc"/><circle cx="3.5" cy="2.5" r="1" fill="#333"/></svg>
<svg class="i" style="left:646px;top:311.8px" width="5" height="5" viewBox="0 0 5 5"><circle cx="2.5" cy="2.5" r="1.9" fill="none" stroke="#ccc" stroke-width="0.8"/></svg>
<svg class="i" style="left:597px;top:310.3px" width="8" height="8" viewBox="0 0 8 8"><rect width="8" height="8" fill="#f4f4f4"/><path d="M1 1L4 1L7 7L5 7Z" fill="#16b4c8"/></svg>
<div class="t" style="left:607px;top:310.3px;font-size:6.5px">&lt; 路径 &gt;</div>
<svg class="i" style="left:552px;top:322.0px" width="7" height="5" viewBox="0 0 7 5"><path d="M0.5 2.5C2 0.3 5 0.3 6.5 2.5C5 4.7 2 4.7 0.5 2.5Z" fill="#ccc"/><circle cx="3.5" cy="2.5" r="1" fill="#333"/></svg>
<svg class="i" style="left:646px;top:322.0px" width="5" height="5" viewBox="0 0 5 5"><circle cx="2.5" cy="2.5" r="1.9" fill="none" stroke="#ccc" stroke-width="0.8"/></svg>
<svg class="i" style="left:597px;top:320.5px" width="8" height="8" viewBox="0 0 8 8"><rect width="8" height="8" fill="#f4f4f4"/><path d="M1 6L7 2L7 3.5L2 7Z" fill="#f08020"/></svg>
<div class="t" style="left:607px;top:320.5px;font-size:6.5px">&lt; 路径 &gt;</div>
<svg class="i" style="left:552px;top:332.4px" width="7" height="5" viewBox="0 0 7 5"><path d="M0.5 2.5C2 0.3 5 0.3 6.5 2.5C5 4.7 2 4.7 0.5 2.5Z" fill="#ccc"/><circle cx="3.5" cy="2.5" r="1" fill="#333"/></svg>
<svg class="i" style="left:646px;top:332.4px" width="5" height="5" viewBox="0 0 5 5"><circle cx="2.5" cy="2.5" r="1.9" fill="none" stroke="#ccc" stroke-width="0.8"/></svg>
<svg class="i" style="left:597px;top:330.9px" width="8" height="8" viewBox="0 0 8 8"><rect width="8" height="8" fill="#f4f4f4"/><path d="M1 5.5L7 2.5L6.5 4.5L1 6.5Z" fill="#d8302a"/></svg>
<div class="t" style="left:607px;top:330.9px;font-size:6.5px">&lt; 路径 &gt;</div>
<svg class="i" style="left:552px;top:342.6px" width="7" height="5" viewBox="0 0 7 5"><path d="M0.5 2.5C2 0.3 5 0.3 6.5 2.5C5 4.7 2 4.7 0.5 2.5Z" fill="#ccc"/><circle cx="3.5" cy="2.5" r="1" fill="#333"/></svg>
<svg class="i" style="left:646px;top:342.6px" width="5" height="5" viewBox="0 0 5 5"><circle cx="2.5" cy="2.5" r="1.9" fill="none" stroke="#ccc" stroke-width="0.8"/></svg>
<svg class="i" style="left:597px;top:341.1px" width="8" height="8" viewBox="0 0 8 8"><rect width="8" height="8" fill="#f4f4f4"/><path d="M1 6L7 2L7 3L1 7Z" fill="#d83a2a"/></svg>
<div class="t" style="left:607px;top:341.1px;font-size:6.5px">&lt; 路径 &gt;</div>
<svg class="i" style="left:552px;top:352.8px" width="7" height="5" viewBox="0 0 7 5"><path d="M0.5 2.5C2 0.3 5 0.3 6.5 2.5C5 4.7 2 4.7 0.5 2.5Z" fill="#ccc"/><circle cx="3.5" cy="2.5" r="1" fill="#333"/></svg>
<svg class="i" style="left:646px;top:352.8px" width="5" height="5" viewBox="0 0 5 5"><circle cx="2.5" cy="2.5" r="1.9" fill="none" stroke="#ccc" stroke-width="0.8"/></svg>
<svg class="i" style="left:597px;top:351.3px" width="8" height="8" viewBox="0 0 8 8"><rect width="8" height="8" fill="#f4f4f4"/><path d="M2 1L6 1L6 7L2 7Z" fill="#f09020"/></svg>
<div class="t" style="left:607px;top:351.3px;font-size:6.5px">&lt; 路径 &gt;</div>
<svg class="i" style="left:552px;top:362.9px" width="7" height="5" viewBox="0 0 7 5"><path d="M0.5 2.5C2 0.3 5 0.3 6.5 2.5C5 4.7 2 4.7 0.5 2.5Z" fill="#ccc"/><circle cx="3.5" cy="2.5" r="1" fill="#333"/></svg>
<svg class="i" style="left:646px;top:362.9px" width="5" height="5" viewBox="0 0 5 5"><circle cx="2.5" cy="2.5" r="1.9" fill="none" stroke="#ccc" stroke-width="0.8"/></svg>
<svg class="i" style="left:597px;top:361.4px" width="8" height="8" viewBox="0 0 8 8"><rect width="8" height="8" fill="#f4f4f4"/><path d="M1 7L4 2L7 1L6 7Z" fill="#f07a18"/></svg>
<div class="t" style="left:607px;top:361.4px;font-size:6.5px">&lt; 路径 &gt;</div>
<svg class="i" style="left:552px;top:373.3px" width="7" height="5" viewBox="0 0 7 5"><path d="M0.5 2.5C2 0.3 5 0.3 6.5 2.5C5 4.7 2 4.7 0.5 2.5Z" fill="#ccc"/><circle cx="3.5" cy="2.5" r="1" fill="#333"/></svg>
<svg class="i" style="left:646px;top:373.3px" width="5" height="5" viewBox="0 0 5 5"><circle cx="2.5" cy="2.5" r="1.9" fill="none" stroke="#ccc" stroke-width="0.8"/></svg>
<svg class="i" style="left:597px;top:371.8px" width="8" height="8" viewBox="0 0 8 8"><rect width="8" height="8" fill="#f4f4f4"/><path d="M1 1L7 1L7 3L1 7Z" fill="#1a4fb0"/></svg>
<div class="t" style="left:607px;top:371.8px;font-size:6.5px">&lt; 路径 &gt;</div>
<svg class="i" style="left:552px;top:383.7px" width="7" height="5" viewBox="0 0 7 5"><path d="M0.5 2.5C2 0.3 5 0.3 6.5 2.5C5 4.7 2 4.7 0.5 2.5Z" fill="#ccc"/><circle cx="3.5" cy="2.5" r="1" fill="#333"/></svg>
<svg class="i" style="left:646px;top:383.7px" width="5" height="5" viewBox="0 0 5 5"><circle cx="2.5" cy="2.5" r="1.9" fill="none" stroke="#ccc" stroke-width="0.8"/></svg>
<svg class="i" style="left:597px;top:382.2px" width="8" height="8" viewBox="0 0 8 8"><rect width="8" height="8" fill="#f4f4f4"/><path d="M1 4H7V5.5H1Z" fill="#444"/></svg>
<div class="t" style="left:607px;top:382.2px;font-size:6.5px">&lt; 路径 &gt;</div>
<svg class="i" style="left:552px;top:393.8px" width="7" height="5" viewBox="0 0 7 5"><path d="M0.5 2.5C2 0.3 5 0.3 6.5 2.5C5 4.7 2 4.7 0.5 2.5Z" fill="#ccc"/><circle cx="3.5" cy="2.5" r="1" fill="#333"/></svg>
<svg class="i" style="left:646px;top:393.8px" width="5" height="5" viewBox="0 0 5 5"><circle cx="2.5" cy="2.5" r="1.9" fill="none" stroke="#ccc" stroke-width="0.8"/></svg>
<svg class="i" style="left:597px;top:392.3px" width="8" height="8" viewBox="0 0 8 8"><rect width="8" height="8" fill="#f4f4f4"/><path d="M1 7L3 1L7 1L7 7Z" fill="#1a4fb0"/></svg>
<div class="t" style="left:607px;top:392.3px;font-size:6.5px">&lt; 路径 &gt;</div>
<div class="a" style="left:548px;top:398px;width:121px;height:7px;background:#2e2e2e"></div>
<div class="t d" style="left:551px;top:399px;font-size:6px">1 个图层</div>
<div class="a" style="left:588px;top:400px;width:5px;height:5px;border:1px solid #999"></div>
<div class="a" style="left:600px;top:400px;width:5px;height:5px;border:1px solid #999"></div>
<div class="a" style="left:613px;top:400px;width:5px;height:5px;border:1px solid #999"></div>
<div class="a" style="left:627px;top:400px;width:5px;height:5px;border:1px solid #999"></div>
<div class="a" style="left:639px;top:400px;width:5px;height:5px;border:1px solid #999"></div>
<div class="a" style="left:652px;top:400px;width:5px;height:5px;border:1px solid #999"></div>
</body></html>
